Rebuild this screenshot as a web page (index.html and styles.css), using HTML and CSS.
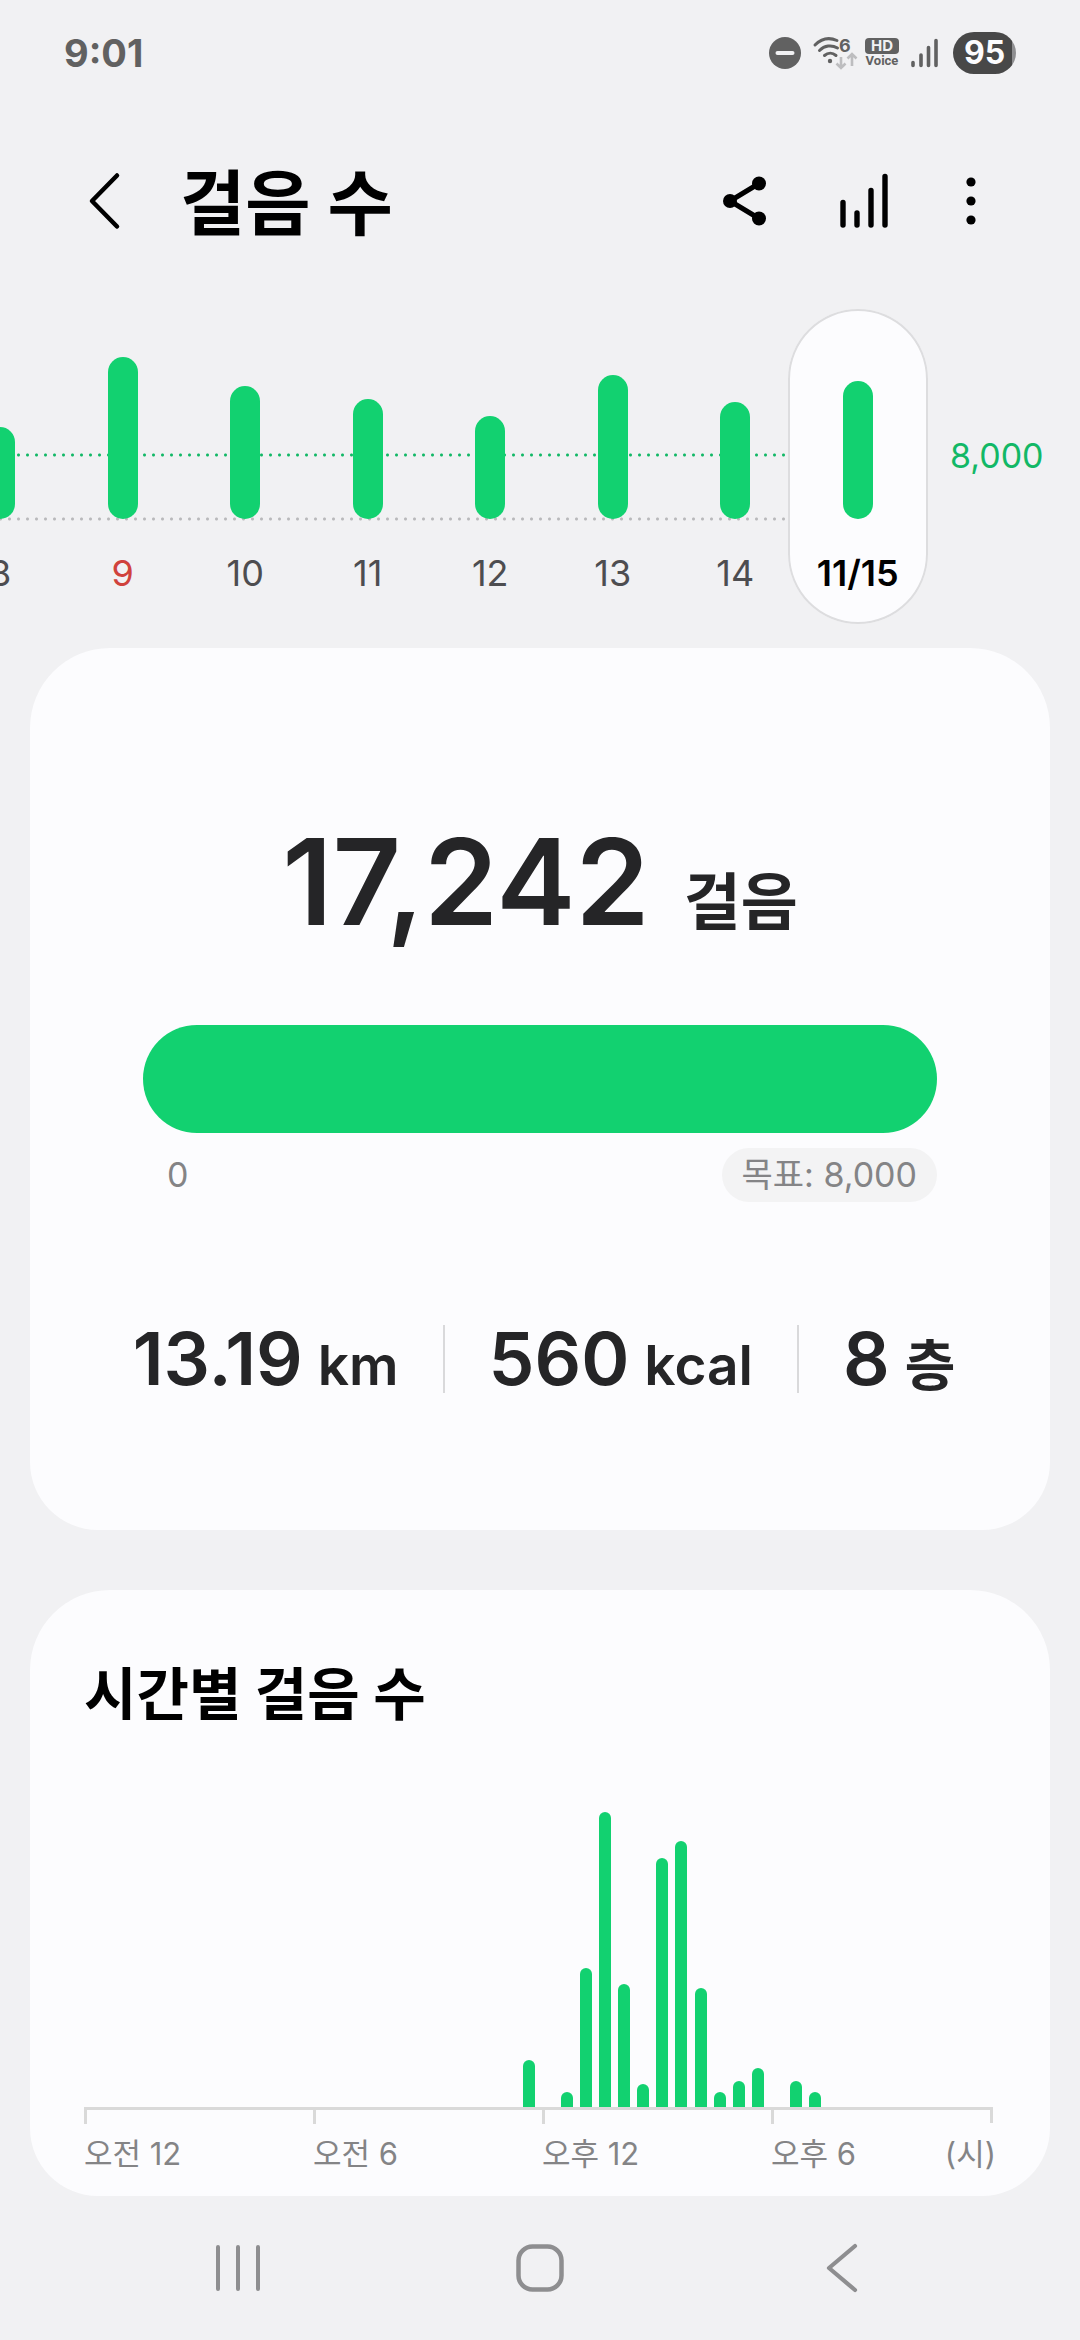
FILE: index.html
```html
<!DOCTYPE html>
<html lang="ko">
<head>
<meta charset="utf-8">
<meta name="viewport" content="width=device-width, initial-scale=1">
<title>걸음 수</title>
<link rel="stylesheet" href="styles.css">
</head>
<body>
<div class="screen">
  <div class="status">
    <span class="clock">9:01</span>
    <div class="status-icons">
      <svg width="32" height="32" viewBox="0 0 32 32" aria-hidden="true"><circle cx="16" cy="16" r="16" fill="#616161"/><path d="M8.500 16h15" stroke="#f1f1f3" stroke-width="4" stroke-linecap="round"/></svg>
      <svg class="wifi" width="46" height="36" viewBox="0 0 46 36" aria-hidden="true">
        <g fill="none" stroke="#616161" stroke-width="3" stroke-linecap="round"><path d="M4 10C10 4 18 2 26 5.500"/><path d="M8.500 15.500c5-5 12-6 18-2.500"/><path d="M13.500 20.500c3.500-3 8-3 11.500 0"/></g>
        <circle cx="19" cy="26" r="2.200" fill="#616161"/>
        <g fill="none" stroke="#bdbdbf" stroke-width="2.600"><path d="M30 22v11M25.500 28.500l4.500 4.500 4.500-4.500M41 31V19M36.500 23.500l4.500-4.500 4.500 4.500"/></g>
        <text class="wifi-gen" x="28" y="17">6</text>
      </svg>
      <span class="volte"><span class="hd">HD</span><span class="voice">Voice</span></span>
      <svg class="signal" width="28" height="30" viewBox="0 0 28 30" aria-hidden="true"><path d="M2 24.500v3M10 17v10.500M17.500 9.500v18M25 2.500v25" stroke="#616161" stroke-width="3.600" stroke-linecap="round"/></svg>
      <span class="battery">95</span>
    </div>
  </div>

  <header class="appbar">
    <button class="icon-btn back" aria-label="뒤로"><svg width="32" height="58" viewBox="0 0 32 58"><path d="M29 3.500L4 29l25 25.500" fill="none" stroke="#000" stroke-width="4.500" stroke-linecap="round" stroke-linejoin="round"/></svg></button>
    <h1 class="title">걸음 수</h1>
    <div class="actions">
      <button class="icon-btn" aria-label="공유"><svg width="46" height="50" viewBox="0 0 46 50"><path d="M37 7.500L8 25l29 17.500" fill="none" stroke="#000" stroke-width="5"/><circle cx="37" cy="7.500" r="7"/><circle cx="8" cy="25" r="7"/><circle cx="37" cy="42.500" r="7"/></svg></button>
      <button class="icon-btn" aria-label="통계"><svg width="48" height="56" viewBox="0 0 48 56"><path d="M3 29.500v22.500M17 40v12M31 17.500v34.500M45 3.500v48.500" stroke="#000" stroke-width="5.400" stroke-linecap="round"/></svg></button>
      <button class="icon-btn more" aria-label="더보기"><svg width="10" height="48" viewBox="0 0 10 48"><circle cx="5" cy="5" r="4.600"/><circle cx="5" cy="24" r="4.600"/><circle cx="5" cy="43" r="4.600"/></svg></button>
    </div>
  </header>

  <section class="days" aria-label="일별 걸음 수">
    <div class="strip">
      <button class="day"><span class="bar" style="height:92px"></span><span class="date">8</span></button>
      <button class="day holiday"><span class="bar" style="height:162px"></span><span class="date">9</span></button>
      <button class="day"><span class="bar" style="height:133px"></span><span class="date">10</span></button>
      <button class="day"><span class="bar" style="height:120px"></span><span class="date">11</span></button>
      <button class="day"><span class="bar" style="height:103px"></span><span class="date">12</span></button>
      <button class="day"><span class="bar" style="height:144px"></span><span class="date">13</span></button>
      <button class="day"><span class="bar" style="height:117px"></span><span class="date">14</span></button>
      <button class="day selected" aria-current="date"><span class="bar" style="height:138px"></span><span class="date">11/15</span></button>
    </div>
    <span class="goal-line">8,000</span>
  </section>

  <main class="cards">
    <section class="card summary">
      <p class="total"><span class="total-num">17,242</span><span class="total-unit">걸음</span></p>
      <div class="progress" role="progressbar" aria-label="목표 달성" aria-valuenow="100" aria-valuemin="0" aria-valuemax="100"><div class="progress-fill" style="width:100%"></div></div>
      <div class="scale"><span class="zero">0</span><span class="goal">목표: 8,000</span></div>
      <div class="stats">
        <p class="stat"><span class="num">13.19</span><span class="unit">km</span></p>
        <p class="stat"><span class="num">560</span><span class="unit">kcal</span></p>
        <p class="stat"><span class="num">8</span><span class="unit">층</span></p>
      </div>
    </section>

    <section class="card hourly">
      <h2 class="card-title">시간별 걸음 수</h2>
      <div class="plot">
        <i></i><i></i><i></i><i></i><i></i><i></i><i></i><i></i><i></i><i></i><i></i><i></i>
        <i></i><i></i><i></i><i></i><i></i><i></i><i></i><i></i><i></i><i></i><i></i><i style="height:47px"></i>
        <i></i><i style="height:15px"></i><i style="height:139px"></i><i style="height:295px"></i><i style="height:123px"></i><i style="height:23px"></i><i style="height:249px"></i><i style="height:266px"></i><i style="height:119px"></i><i style="height:15px"></i><i style="height:26px"></i><i style="height:39px"></i>
        <i></i><i style="height:26px"></i><i style="height:15px"></i><i></i><i></i><i></i><i></i><i></i><i></i><i></i><i></i><i></i>
      </div>
      <div class="axis">
        <span class="tick">오전 12</span><span class="tick">오전 6</span><span class="tick">오후 12</span><span class="tick last">오후 6<span class="axis-unit">(시)</span></span>
      </div>
    </section>
  </main>

  <nav class="navbar" aria-label="시스템 탐색">
    <button class="nav-btn" aria-label="최근 앱"><svg width="46" height="48" viewBox="0 0 46 48"><path d="M3 3v42M23 3v42M43 3v42" stroke="#8e8e90" stroke-width="4" stroke-linecap="round"/></svg></button>
    <button class="nav-btn" aria-label="홈"><svg width="50" height="50" viewBox="0 0 50 50"><rect x="3.500" y="3.500" width="43" height="43" rx="14" fill="none" stroke="#8e8e90" stroke-width="4.500"/></svg></button>
    <button class="nav-btn" aria-label="뒤로 가기"><svg width="34" height="50" viewBox="0 0 34 50"><path d="M30 3L4 25l26 22" fill="none" stroke="#8e8e90" stroke-width="4.200" stroke-linecap="round" stroke-linejoin="round"/></svg></button>
  </nav>
</div>
</body>
</html>
```

FILE: styles.css
```css
* {
  box-sizing: border-box;
}

body {
  margin: 0;
  background: #f1f1f3;
  color: #252527;
  font-family: Inter, "Noto Sans CJK KR", sans-serif;
}

h1, h2, p {
  margin: 0;
}

button {
  padding: 0;
  border: 0;
  background: none;
  color: inherit;
  font: inherit;
}

svg {
  display: block;
  overflow: visible;
}

.screen {
  display: flex;
  flex-direction: column;
  min-height: 100vh;
  overflow: hidden;
}

/* Status bar */
.status {
  display: flex;
  align-items: center;
  justify-content: space-between;
  height: 106px;
  padding: 0 64px;
}

.clock {
  color: #616161;
  font-size: 38px;
  font-weight: 700;
}

.status-icons {
  display: flex;
  align-items: center;
}

.wifi {
  margin-left: 10px;
}

.wifi-gen {
  fill: #616161;
  font-size: 18px;
  font-weight: 700;
}

.volte {
  display: flex;
  flex-direction: column;
  align-items: center;
  width: 34px;
  margin-left: 8px;
  color: #616161;
}

.hd {
  width: 34px;
  border-radius: 4px;
  background: #616161;
  color: #f1f1f3;
  font-size: 15px;
  font-weight: 700;
  line-height: 16px;
  text-align: center;
}

.voice {
  font-family: Roboto, sans-serif;
  font-size: 13px;
  font-weight: 700;
  line-height: 14px;
}

.signal {
  margin-left: 12px;
}

.battery {
  width: 63px;
  margin-left: 14px;
  border-radius: 21px;
  background: linear-gradient(to right, #484848 59px, #8f8f91 59px);
  color: #fcfcfe;
  font-size: 32px;
  font-weight: 700;
  line-height: 42px;
  text-align: center;
}

/* App bar */
.appbar {
  display: flex;
  align-items: center;
  height: 190px;
  padding: 0 104px 0 88px;
  color: #000;
}

.title {
  margin-left: 60px;
  padding-top: 4px;
  font-size: 71px;
  font-weight: 700;
  line-height: 100px;
}

.actions {
  display: flex;
  align-items: center;
  gap: 72px;
  margin-left: auto;
}

.more {
  margin-left: 6px;
}

/* Daily strip */
.days {
  display: flex;
  height: 315px;
  margin-top: 13px;
}

.strip {
  display: grid;
  flex: 1;
  grid-template-columns: repeat(8, 1fr);
  margin-left: -61px;
  background-image:
    radial-gradient(circle, #12b866 1px, transparent 2px),
    radial-gradient(circle, #b9b9bb 1px, transparent 2px);
  background-position: 3px 144px, 3px 208px;
  background-repeat: repeat-x;
  background-size: 9px 4px;
}

.day {
  display: grid;
  grid-template-rows: 210px 54px;
  align-content: start;
  align-items: end;
  justify-items: center;
  color: #4d4d50;
  font-size: 36px;
}

.bar {
  width: 30px;
  border-radius: 15px;
  background: #12d170;
}

.date {
  margin-bottom: -27px;
  line-height: 54px;
}

.holiday {
  color: #d0423c;
}

.selected {
  margin: 0 -9px;
  border-radius: 71px;
  background: #fcfcfe;
  box-shadow: inset 0 0 0 2px #dddddf;
  color: #000;
  font-weight: 600;
}

.goal-line {
  width: 161px;
  padding: 120px 0 0 31px;
  color: #12b866;
  font-size: 34px;
  line-height: 54px;
}

/* Cards */
.cards {
  display: grid;
  gap: 60px;
  padding: 24px 30px 0;
}

.card {
  border-radius: 80px 80px 68px 68px;
  background: #fcfcfe;
}

.summary {
  padding: 154px 0 137px;
}

.total {
  display: flex;
  align-items: baseline;
  justify-content: center;
  gap: 34px;
  line-height: 160px;
}

.total-num {
  font-size: 119px;
  font-weight: 600;
}

.total-unit {
  font-size: 62px;
  font-weight: 700;
  line-height: 80px;
}

.progress {
  height: 108px;
  margin: 63px 113px 0;
}

.progress-fill {
  height: 100%;
  border-radius: 54px;
  background: #12d170;
}

.scale {
  display: flex;
  justify-content: space-between;
  margin: 15px 113px 0;
  padding-left: 24px;
  color: #848486;
  font-size: 34px;
  line-height: 54px;
}

.goal {
  padding: 0 20px;
  border-radius: 27px;
  background: #f3f3f4;
}

.stats {
  display: flex;
  justify-content: center;
  margin-top: 123px;
  padding-left: 8px;
}

.stat {
  display: flex;
  align-items: baseline;
  gap: 15px;
  height: 68px;
  padding: 0 44px;
  line-height: 68px;
}

.stat + .stat {
  border-left: 2px solid #d9d9db;
}

.num {
  font-size: 73px;
  font-weight: 600;
}

.unit {
  font-size: 55px;
  font-weight: 600;
  line-height: 60px;
}

/* Hourly chart */
.hourly {
  padding: 65px 57px 18px 54px;
}

.card-title {
  color: #000;
  font-size: 57px;
  font-weight: 700;
  line-height: 80px;
}

.plot {
  display: flex;
  align-items: flex-end;
  justify-content: space-between;
  height: 372px;
}

.plot i {
  width: 12px;
  border-radius: 6px 6px 0 0;
  background: #12d170;
}

.axis {
  display: grid;
  grid-template-columns: 229fr 229fr 229fr 222fr;
  border-top: 3px solid #d9d9d9;
  color: #848486;
  font-size: 31px;
  line-height: 48px;
}

.tick {
  padding-top: 20px;
  background: linear-gradient(#d9d9d9, #d9d9d9) no-repeat 0 0 / 3px 14px;
}

.last {
  display: flex;
  justify-content: space-between;
  border-image: linear-gradient(#d9d9d9 14px, transparent 14px) 1;
  border-style: solid;
  border-width: 0 3px 0 0;
}

.axis-unit {
  margin-right: -6px;
}

/* System navigation */
.navbar {
  display: flex;
  align-items: center;
  justify-content: space-between;
  flex: 1;
  min-height: 140px;
  padding: 0 213px;
}

.nav-btn {
  display: flex;
  justify-content: center;
  width: 50px;
}
```
